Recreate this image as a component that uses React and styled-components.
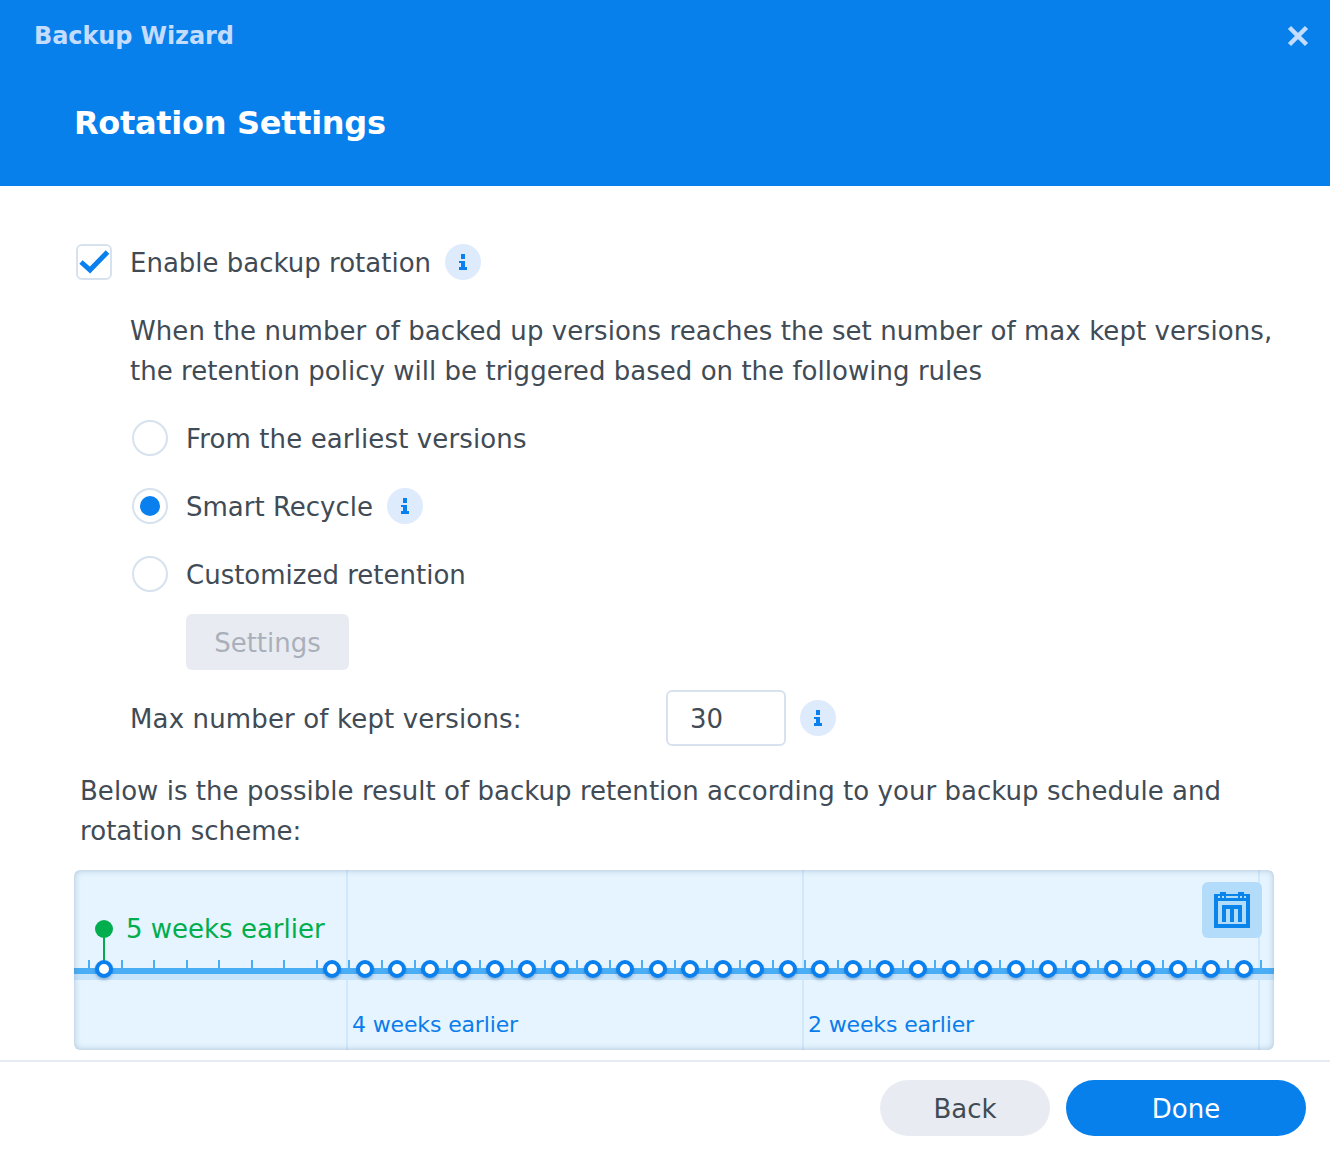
import styled, { createGlobalStyle } from 'styled-components';

const GlobalStyle = createGlobalStyle`
  html, body {
    margin: 0;
    padding: 0;
    background: #fff;
  }
  body {
    font-family: "DejaVu Sans", Verdana, sans-serif;
    color: #414b55;
  }
`;

const Dialog = styled.div`
  width: 1330px;
  height: 1152px;
  display: flex;
  flex-direction: column;
  overflow: hidden;
`;

const Header = styled.header`
  height: 186px;
  flex: none;
  box-sizing: border-box;
  background: #0880ec;
  position: relative;
  padding: 21px 0 0 34px;
`;

const WindowTitle = styled.div`
  font-size: 24px;
  line-height: 30px;
  font-weight: 700;
  letter-spacing: -0.1px;
  color: #c4dcfd;
`;

const StepTitle = styled.h1`
  margin: 47px 0 0 40px;
  font-size: 32px;
  line-height: 50px;
  font-weight: 700;
  letter-spacing: -0.3px;
  color: #fff;
`;

const CloseButton = styled.svg`
  position: absolute;
  top: 24px;
  right: 20px;
  width: 24px;
  height: 24px;
`;

const Body = styled.main`
  flex: 1;
  box-sizing: border-box;
  padding: 58px 56px 0 74px;
`;

const Row = styled.div`
  display: flex;
  align-items: center;
  height: 36px;
`;

const Check = styled.span`
  width: 36px;
  height: 36px;
  box-sizing: border-box;
  margin-left: 2px;
  margin-right: 18px;
  border: 2px solid #d7e2ee;
  border-radius: 6px;
  background: #fff;
  display: flex;
  align-items: center;
  justify-content: center;
`;

const Label = styled.span`
  padding-top: 2px;
  font-size: 26px;
  line-height: 36px;
  letter-spacing: ${(p) => p.$tracking || 0}px;
  white-space: nowrap;
`;

const Paragraph = styled.p`
  margin: ${(p) => p.$margin};
  font-size: 26px;
  line-height: 40px;
  white-space: nowrap;
`;

const Line = styled.span`
  display: block;
  letter-spacing: ${(p) => p.$tracking}px;
`;

const RadioRow = styled(Row)`
  margin: ${(p) => p.$top}px 0 0 58px;
`;

const Radio = styled.span`
  width: 36px;
  height: 36px;
  box-sizing: border-box;
  margin-right: 18px;
  border: 2px solid #d7e2ee;
  border-radius: 50%;
  display: flex;
  align-items: center;
  justify-content: center;

  &::after {
    content: '';
    display: ${(p) => (p.$checked ? 'block' : 'none')};
    width: 20px;
    height: 20px;
    border-radius: 50%;
    background: #0a7fee;
  }
`;

const InfoCircle = styled.span`
  width: 36px;
  height: 36px;
  margin-left: 14px;
  border-radius: 50%;
  background: #deebfd;
  display: flex;
  align-items: center;
  justify-content: center;
`;

const SettingsButton = styled.button`
  display: block;
  width: 163px;
  height: 56px;
  margin: 22px 0 0 112px;
  padding: 2px 0 0;
  border: 0;
  border-radius: 6px;
  background: #e8ecf2;
  color: #aab0b9;
  font: 26px "DejaVu Sans", Verdana, sans-serif;
`;

const VersionsRow = styled(Row)`
  height: 56px;
  margin: 20px 0 0 56px;
`;

const VersionsLabel = styled(Label)`
  width: 536px;
`;

const NumberBox = styled.div`
  width: 120px;
  height: 56px;
  box-sizing: border-box;
  padding-left: 22px;
  border: 2px solid #d7e2ee;
  border-radius: 6px;
  font-size: 26px;
  line-height: 54px;
`;

const Timeline = styled.section`
  position: relative;
  width: 1200px;
  height: 180px;
  margin-top: 19px;
  box-sizing: border-box;
  display: grid;
  grid-template-columns: 274px 456px 456px 14px;
  border-radius: 6px;
  background: #e5f4fe;
  overflow: hidden;

  &::after {
    content: '';
    position: absolute;
    inset: 0;
    border-radius: 6px;
    box-shadow: inset 0 0 6px rgba(70, 110, 150, 0.38);
    pointer-events: none;
  }
`;

const Period = styled.div`
  box-sizing: border-box;
  display: flex;
  align-items: flex-end;
  padding: 0 0 10px 4px;
  border-right: ${(p) => (p.$last ? '0' : '2px solid #cfe8fc')};
  color: #0a7ceb;
  font-size: 22px;
  line-height: 30px;
  letter-spacing: -0.14px;
  white-space: nowrap;
`;

const Rail = styled.div`
  position: absolute;
  left: 0;
  right: 0;
  top: 98px;
  height: 12px;
  background: linear-gradient(#4aaef6 0 6px, #c8e4fb 6px 12px);
`;

const Tick = styled.span`
  position: absolute;
  top: 90px;
  width: 2px;
  height: 8px;
  background: #4aaef6;
`;

const Dot = styled.span`
  position: absolute;
  top: 90px;
  width: 18px;
  height: 18px;
  box-sizing: border-box;
  margin-left: -9px;
  border: 4px solid #0a7fee;
  border-radius: 50%;
  background: #fff;
  box-shadow: 0 2px 3px rgba(0, 60, 120, 0.3);
`;

const Pin = styled.span`
  position: absolute;
  left: 21px;
  top: 50px;
  width: 18px;
  height: 18px;
  border-radius: 50%;
  background: #00ae4d;

  &::after {
    content: '';
    position: absolute;
    left: 8px;
    top: 17px;
    width: 2px;
    height: 24px;
    background: #00ae4d;
  }
`;

const PinLabel = styled.span`
  position: absolute;
  left: 52px;
  top: 39px;
  color: #00ae4d;
  font-size: 26px;
  line-height: 40px;
  white-space: nowrap;
`;

const CalendarButton = styled.button`
  position: absolute;
  top: 12px;
  right: 12px;
  width: 60px;
  height: 56px;
  padding: 0;
  border: 0;
  border-radius: 6px;
  background: #b3dcfb;
  display: flex;
  align-items: center;
  justify-content: center;
`;

const Footer = styled.footer`
  height: 92px;
  flex: none;
  box-sizing: border-box;
  border-top: 2px solid #e6ebf2;
  padding: 18px 24px 0 0;
  display: flex;
  justify-content: flex-end;
  gap: 16px;
`;

const PillButton = styled.button`
  width: ${(p) => p.$width}px;
  height: 56px;
  padding: 2px 0 0;
  border: 0;
  border-radius: 28px;
  background: ${(p) => (p.$primary ? '#0880ec' : '#e8ecf2')};
  color: ${(p) => (p.$primary ? '#fff' : '#414b55')};
  font: 26px "DejaVu Sans", Verdana, sans-serif;
`;

function InfoIcon() {
  return (
    <InfoCircle>
      <svg width="8" height="16" viewBox="0 0 8 16" fill="#0a7fee">
        <rect x="2" y="0" width="4" height="5" />
        <rect x="0" y="7" width="6" height="2" />
        <rect x="2" y="7" width="4" height="7" />
        <rect x="0" y="13" width="8" height="3" />
      </svg>
    </InfoCircle>
  );
}

function CalendarIcon() {
  return (
    <svg width="36" height="36" viewBox="0 0 36 36" fill="#0884ea">
      <path fillRule="evenodd" d="M0 2h36v34H0V2zM4 4v2h28V4H4zM4 9v23h28V9H4z" />
      <path fillRule="evenodd" d="M6 0h6v7H6V0zM8 2v4h2V2H8zM24 0h6v7h-6V0zM26 2v4h2V2h-2z" />
      <path d="M8 13h20v17h-4V17h-4v13h-4V17h-4v13H8V13z" />
    </svg>
  );
}

const ticks = Array.from({ length: 37 }, (_, i) => 14 + i * 32.55);
const dots = [30, ...Array.from({ length: 29 }, (_, i) => 258.1 + i * 32.55)];

export default function App() {
  return (
    <Dialog>
      <GlobalStyle />
      <Header>
        <WindowTitle>Backup Wizard</WindowTitle>
        <StepTitle>Rotation Settings</StepTitle>
        <CloseButton viewBox="0 0 24 24">
          <path d="M3.5 3.5l17 17M20.5 3.5l-17 17" stroke="#c4dcfd" strokeWidth="4.5" fill="none" />
        </CloseButton>
      </Header>
      <Body>
        <Row>
          <Check>
            <svg width="32" height="26" viewBox="0 0 32 26">
              <path d="M3 13l9 8L29.5 3" stroke="#0a7fee" strokeWidth="5" fill="none" />
            </svg>
          </Check>
          <Label>Enable backup rotation</Label>
          <InfoIcon />
        </Row>
        <Paragraph $margin="31px 0 0 56px">
          <Line $tracking={0.07}>When the number of backed up versions reaches the set number of max kept versions,</Line>
          <Line $tracking={0.03}>the retention policy will be triggered based on the following rules</Line>
        </Paragraph>
        <RadioRow $top={29}>
          <Radio />
          <Label $tracking={0.12}>From the earliest versions</Label>
        </RadioRow>
        <RadioRow $top={32}>
          <Radio $checked />
          <Label>Smart Recycle</Label>
          <InfoIcon />
        </RadioRow>
        <RadioRow $top={32}>
          <Radio />
          <Label>Customized retention</Label>
        </RadioRow>
        <SettingsButton>Settings</SettingsButton>
        <VersionsRow>
          <VersionsLabel $tracking={0.14}>Max number of kept versions:</VersionsLabel>
          <NumberBox>30</NumberBox>
          <InfoIcon />
        </VersionsRow>
        <Paragraph $margin="25px 0 0 6px">
          <Line $tracking={0.035}>Below is the possible result of backup retention according to your backup schedule and</Line>
          <Line $tracking={0.05}>rotation scheme:</Line>
        </Paragraph>
        <Timeline>
          <Period />
          <Period>4 weeks earlier</Period>
          <Period>2 weeks earlier</Period>
          <Period $last />
          <Rail />
          {ticks.map((x) => (
            <Tick key={x} style={{ left: x }} />
          ))}
          <Pin />
          <PinLabel>5 weeks earlier</PinLabel>
          {dots.map((x) => (
            <Dot key={x} style={{ left: x }} />
          ))}
          <CalendarButton>
            <CalendarIcon />
          </CalendarButton>
        </Timeline>
      </Body>
      <Footer>
        <PillButton $width={170}>Back</PillButton>
        <PillButton $width={240} $primary>Done</PillButton>
      </Footer>
    </Dialog>
  );
}
